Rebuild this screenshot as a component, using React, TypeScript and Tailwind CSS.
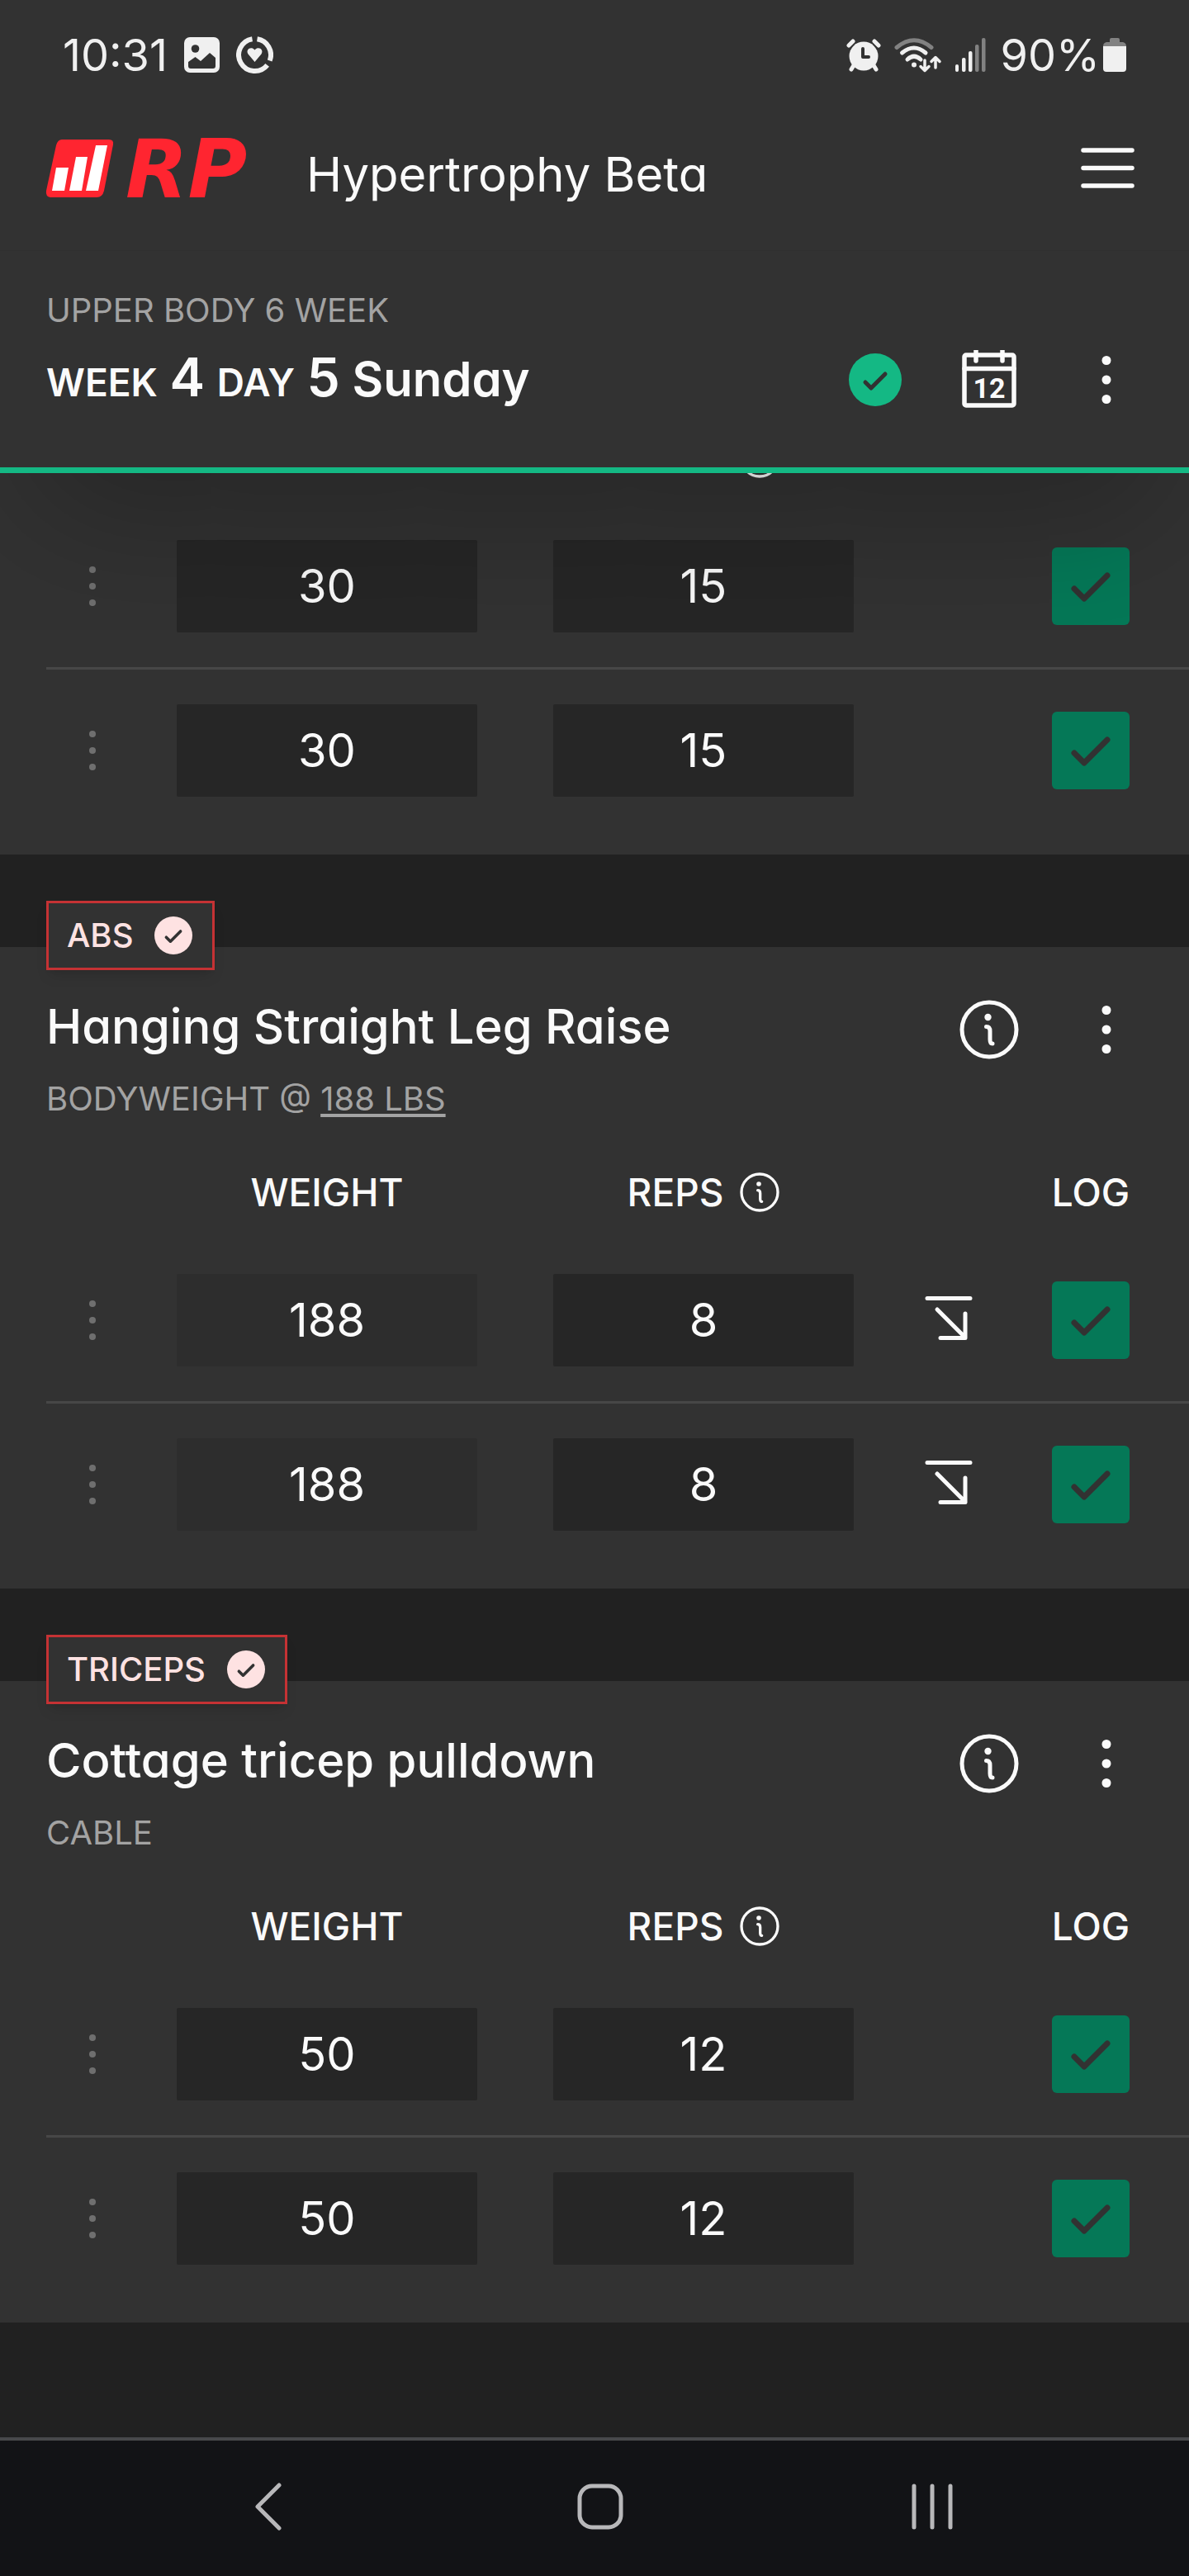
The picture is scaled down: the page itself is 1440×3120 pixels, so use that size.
type WorkoutSet = { weight: number; reps: number; skippable?: boolean; locked?: boolean };

type Exercise = {
  muscle: string;
  name: string;
  equipment: string;
  bodyweight?: string;
  sets: WorkoutSet[];
};

const previousSets: WorkoutSet[] = [
  { weight: 30, reps: 15 },
  { weight: 30, reps: 15 },
];

const exercises: Exercise[] = [
  {
    muscle: 'ABS',
    name: 'Hanging Straight Leg Raise',
    equipment: 'BODYWEIGHT',
    bodyweight: '188 LBS',
    sets: [
      { weight: 188, reps: 8, skippable: true, locked: true },
      { weight: 188, reps: 8, skippable: true, locked: true },
    ],
  },
  {
    muscle: 'TRICEPS',
    name: 'Cottage tricep pulldown',
    equipment: 'CABLE',
    sets: [
      { weight: 50, reps: 12 },
      { weight: 50, reps: 12 },
    ],
  },
];

function KebabIcon() {
  return (
    <svg viewBox="0 0 72 72" className="h-[72px] w-[72px]" fill="currentColor">
      <circle cx="36" cy="12.5" r="5.5" />
      <circle cx="36" cy="36" r="5.5" />
      <circle cx="36" cy="59.5" r="5.5" />
    </svg>
  );
}

function InfoIcon({ className }: { className: string }) {
  return (
    <svg
      viewBox="0 0 72 72"
      className={className}
      fill="none"
      stroke="currentColor"
      strokeWidth="5"
      strokeLinecap="round"
    >
      <circle cx="36" cy="36" r="33" />
      <circle cx="34.5" cy="21" r="4.2" fill="currentColor" stroke="none" />
      <path d="M32.5 32.5 Q37 32.5 37 38 L37 48 Q37 53 40 53" />
    </svg>
  );
}

function CheckCircle({ className }: { className: string }) {
  return (
    <svg viewBox="0 0 64 64" className={className}>
      <circle cx="32" cy="32" r="32" fill="currentColor" />
      <path
        d="M20 35 L27 42 L44 25"
        fill="none"
        stroke="#323232"
        strokeWidth="5"
        strokeLinecap="round"
        strokeLinejoin="round"
      />
    </svg>
  );
}

function StatusBar() {
  return (
    <div className="flex h-[133px] items-center justify-between px-[76px] text-[#f0f0f0]">
      <div className="flex items-center gap-5">
        <span className="text-[54px] leading-[56px]">10:31</span>
        {/* Picture */}
        <svg viewBox="0 0 43 43" className="h-[43px] w-[43px]">
          <rect width="43" height="43" rx="7" fill="currentColor" />
          <circle cx="13.5" cy="14" r="4.8" fill="#323232" />
          <path d="M5 35 V30 L13.5 24 L20 29 L31 19 L38 25 V35 Q38 38 35 38 H8 Q5 38 5 35 Z" fill="#323232" />
        </svg>
        {/* Health ring */}
        <svg viewBox="0 0 45 45" className="h-[45px] w-[45px]" fill="none">
          <path
            d="M25.5 3.2 A19.5 19.5 0 0 1 40.7 29.5 M37.7 34.8 A19.5 19.5 0 1 1 19.5 3.2"
            stroke="currentColor"
            strokeWidth="6"
          />
          <path
            d="M22.5 31 L14.5 21.5 C11 16 18 11.5 22.5 16.5 C27 11.5 34 16 30.5 21.5 Z"
            fill="currentColor"
          />
        </svg>
      </div>
      <div className="flex items-center gap-4">
        {/* Alarm */}
        <svg viewBox="0 0 42 40" className="h-10 w-[42px]" fill="none" stroke="currentColor" strokeLinecap="round">
          <path d="M3 8 L8 3 M39 8 L34 3" strokeWidth="5" />
          <path d="M9 32 L6 37 M33 32 L36 37" strokeWidth="5" />
          <circle cx="21" cy="21" r="17.5" fill="currentColor" stroke="none" />
          <path d="M20 12 V22 H27" stroke="#323232" strokeWidth="4" strokeLinejoin="round" />
        </svg>
        {/* Wifi */}
        <svg viewBox="0 0 58 42" className="h-[42px] w-[58px]" fill="none" stroke="currentColor" strokeLinecap="round">
          <path d="M3 11.5 Q24 -6 45 11.5" stroke="#828282" strokeWidth="5" />
          <path d="M9.5 18 Q24 6 38 18" strokeWidth="5" />
          <path d="M16 26 Q24 18.5 32 26" strokeWidth="5" />
          <circle cx="24" cy="32.5" r="3" fill="currentColor" stroke="none" />
          <path
            d="M37 27 V39 M32 34.5 L37 39.5 L42 34.5 M50 36 V25 M45 28.5 L50 23.5 L55 28.5"
            strokeWidth="3.5"
            strokeLinejoin="round"
          />
        </svg>
        {/* Signal */}
        <svg viewBox="0 0 38 41" className="h-[41px] w-[38px]" fill="currentColor">
          <rect x="0" y="32" width="4" height="9" rx="2" />
          <rect x="8" y="24" width="4.5" height="17" rx="2" />
          <rect x="16" y="16" width="4.5" height="25" rx="2" />
          <rect x="24" y="8" width="4.5" height="33" rx="2" fill="#828282" />
          <rect x="32" y="0" width="4.5" height="41" rx="2" fill="#828282" />
        </svg>
        <div className="flex items-center gap-1">
          <span className="text-[54px] leading-[56px]">90%</span>
          <svg viewBox="0 0 28 41" className="h-[41px] w-7">
            <path d="M8 5 V2 Q8 0 10 0 H18 Q20 0 20 2 V5 H24 Q28 6 28 10 H0 Q0 6 4 5 Z" fill="#828282" />
            <path d="M0 10 H28 V37 Q28 41 24 41 H4 Q0 41 0 37 Z" fill="currentColor" />
          </svg>
        </div>
      </div>
    </div>
  );
}

function Logo() {
  return (
    <svg viewBox="0 0 259 70" className="h-[70px] w-[259px] overflow-visible">
      <path
        d="M19 0 H76 Q82 0 81 6 L70 62 Q68 70 61 70 H5 Q-1 69 0 62 L12 7 Q14 0 19 0 Z"
        fill="#ff2530"
      />
      <g fill="#ffffff">
        <path d="M12 34 H27 L22 62 H7 Z" />
        <path d="M36 21 H50 L43 62 H28 Z" />
        <path d="M60 7 H74 L63 62 H48 Z" />
      </g>
      <text
        x="96"
        y="70"
        fill="#ff2530"
        className="font-['DejaVu_Sans',sans-serif] text-[98px] font-bold italic"
      >
        RP
      </text>
    </svg>
  );
}

function Header() {
  return (
    <header className="relative z-10 border-b-[7px] border-[#14b884] bg-[#323232] shadow-[0_88px_175px_-42px_rgba(0,0,0,0.25)]">
      <StatusBar />

      <div className="flex items-end justify-between border-b border-[#2f2f2f] pt-9 pr-16 pb-16 pl-14">
        <a href="#" className="flex items-end gap-14">
          <Logo />
          <span className="text-[58px] leading-[56px]">Hypertrophy Beta</span>
        </a>
        <button type="button" aria-label="Menu">
          <svg
            viewBox="0 0 70 70"
            className="block h-[70px] w-[70px]"
            stroke="currentColor"
            strokeWidth="5.5"
            strokeLinecap="round"
          >
            <path d="M6 13 H65 M6 34.5 H65 M6 56 H65" />
          </svg>
        </button>
      </div>

      <div className="flex flex-col gap-5 pt-11 pr-16 pb-[70px] pl-14">
        <p className="text-[40px] leading-[56px] text-[#a3a3a3]">UPPER BODY 6 WEEK</p>
        <div className="flex h-[72px] items-center justify-between">
          <h1 className="text-[58px] leading-[72px] font-semibold">
            <span className="text-[46px]">WEEK</span> <span className="text-[64px]">4</span>{' '}
            <span className="text-[46px]">DAY</span> <span className="text-[64px]">5</span> Sunday
          </h1>
          <div className="flex items-center gap-[70px]">
            <CheckCircle className="h-16 w-16 text-[#14b884]" />
            <button type="button" aria-label="Calendar">
              <svg
                viewBox="0 0 72 72"
                className="block h-[72px] w-[72px]"
                fill="none"
                stroke="currentColor"
                strokeWidth="5.5"
                strokeLinecap="round"
              >
                <rect x="6" y="6" width="60" height="61" rx="2" />
                <path d="M6 22.5 H66 M20 0.5 V13 M52 0.5 V13" />
                <text
                  x="36"
                  y="58"
                  textAnchor="middle"
                  fill="currentColor"
                  stroke="none"
                  className="font-['Roboto',sans-serif] text-[34px] font-bold"
                >
                  12
                </text>
              </svg>
            </button>
            <button type="button" aria-label="Workout options">
              <KebabIcon />
            </button>
          </div>
        </div>
      </div>
    </header>
  );
}

function SetRow({ set, index, name }: { set: WorkoutSet; index: number; name: string }) {
  const line = index > 0 ? 'border-t-[3px] border-[#474747] py-[42px]' : 'py-[42px]';
  const label = `${name} set ${index + 1}`;

  return (
    <tr>
      <td className={line}>
        <svg viewBox="0 0 112 56" className="block h-14 w-28" fill="#6f6f6f">
          <circle cx="56" cy="8" r="4" />
          <circle cx="56" cy="28" r="4" />
          <circle cx="56" cy="48" r="4" />
        </svg>
      </td>
      <td className={`${line} px-[46px]`}>
        <input
          type="text"
          inputMode="decimal"
          aria-label={`${label} weight`}
          defaultValue={set.weight}
          readOnly={set.locked}
          className={`block h-28 w-full rounded-xs text-center text-[56px] leading-[56px] ${set.locked ? 'bg-[#2d2d2d]' : 'bg-[#262626]'}`}
        />
      </td>
      <td className={`${line} px-[46px]`}>
        <input
          type="text"
          inputMode="numeric"
          aria-label={`${label} reps`}
          defaultValue={set.reps}
          className="block h-28 w-full rounded-xs bg-[#262626] text-center text-[56px] leading-[56px]"
        />
      </td>
      <td className={line}>
        {set.skippable && (
          <button type="button" aria-label={`Skip ${label}`} className="mx-auto block">
            <svg
              viewBox="0 0 60 60"
              className="block h-[60px] w-[60px]"
              fill="none"
              stroke="currentColor"
              strokeWidth="5"
              strokeLinecap="round"
              strokeLinejoin="round"
            >
              <path d="M4 3.5 H56 M16 17 L50 51 M50 22 V51.5 H20" />
            </svg>
          </button>
        )}
      </td>
      <td className={`${line} pr-4`}>
        <label className="mx-auto grid h-[94px] w-[94px] place-items-center">
          <input
            type="checkbox"
            defaultChecked
            aria-label={`Log ${label}`}
            className="peer col-start-1 row-start-1 h-[94px] w-[94px] appearance-none rounded-md bg-[#262626] checked:bg-[#057857]"
          />
          <svg
            viewBox="0 0 94 94"
            className="pointer-events-none col-start-1 row-start-1 hidden h-[94px] w-[94px] peer-checked:block"
            fill="none"
            stroke="#323232"
            strokeWidth="7"
            strokeLinecap="round"
            strokeLinejoin="round"
          >
            <path d="M27 50 L39 62 L67 34" />
          </svg>
        </label>
      </td>
    </tr>
  );
}

function SetTable({ name, sets }: { name: string; sets: WorkoutSet[] }) {
  return (
    <table className="w-full table-fixed border-separate border-spacing-0">
      <thead>
        <tr className="h-[114px] text-[46px] leading-[56px]">
          <th className="w-28" />
          <th className="font-medium">WEIGHT</th>
          <th className="font-medium">
            <span className="flex items-center justify-center gap-5">
              REPS
              <InfoIcon className="h-12 w-12" />
            </span>
          </th>
          <th className="w-[138px]" />
          <th className="w-[222px] pr-4 font-medium">LOG</th>
        </tr>
      </thead>
      <tbody>
        {sets.map((set, index) => (
          <SetRow key={index} set={set} index={index} name={name} />
        ))}
      </tbody>
    </table>
  );
}

function ExerciseCard({ exercise }: { exercise: Exercise }) {
  return (
    <section className="mt-28 flex flex-col bg-[#323232] pb-7 pl-14">
      <div className="-mt-14 flex h-[84px] items-center gap-[26px] self-start border-[3px] border-[#c53234] bg-[#323232] pr-6 pl-[22px] text-[#fee2e2] shadow-lg">
        <span className="text-[40px] leading-[56px] font-medium">{exercise.muscle}</span>
        <CheckCircle className="h-[46px] w-[46px]" />
      </div>

      <div className="mt-9 flex items-start justify-between pr-16">
        <h2 className="text-[58px] leading-[64px] font-medium">{exercise.name}</h2>
        <div className="flex gap-[70px]">
          <button type="button" aria-label={`About ${exercise.name}`}>
            <InfoIcon className="block h-[72px] w-[72px]" />
          </button>
          <button type="button" aria-label={`${exercise.name} options`}>
            <KebabIcon />
          </button>
        </div>
      </div>

      <p className="mt-5 mb-7 text-[40px] leading-[56px] text-[#a3a3a3]">
        {exercise.equipment}
        {exercise.bodyweight && (
          <>
            {' @ '}
            <a href="#" className="underline decoration-4 underline-offset-4">
              {exercise.bodyweight}
            </a>
          </>
        )}
      </p>

      <SetTable name={exercise.name} sets={exercise.sets} />
    </section>
  );
}

function NavBar() {
  return (
    <nav className="flex h-42 items-center justify-around border-t-4 border-[#48494b] bg-[#121316] pr-[110px] pb-1 pl-31 text-[#b8b8ba]">
      <button type="button" aria-label="Back">
        <svg viewBox="0 0 60 60" className="block h-15 w-15" fill="none" stroke="currentColor" strokeWidth="5" strokeLinecap="round" strokeLinejoin="round">
          <path d="M43 4 L17 30 L43 56" />
        </svg>
      </button>
      <button type="button" aria-label="Home">
        <svg viewBox="0 0 60 60" className="block h-15 w-15" fill="none" stroke="currentColor" strokeWidth="5">
          <rect x="5" y="5" width="50" height="50" rx="15" />
        </svg>
      </button>
      <button type="button" aria-label="Recent apps">
        <svg viewBox="0 0 60 60" className="block h-15 w-15" stroke="currentColor" strokeWidth="5" strokeLinecap="round">
          <path d="M8 5 V55 M30 5 V55 M52 5 V55" />
        </svg>
      </button>
    </nav>
  );
}

export default function App() {
  return (
    <div className="flex min-h-screen flex-col bg-[#212121] font-['Inter',sans-serif] text-[#fafafa] [font-feature-settings:'cv11']">
      <Header />
      <main className="flex-1">
        {/* Scrolled partly under the header */}
        <section className="-mt-[75px] bg-[#323232] pb-7 pl-14">
          <SetTable name="Previous exercise" sets={previousSets} />
        </section>
        {exercises.map((exercise) => (
          <ExerciseCard key={exercise.name} exercise={exercise} />
        ))}
      </main>
      <NavBar />
    </div>
  );
}
